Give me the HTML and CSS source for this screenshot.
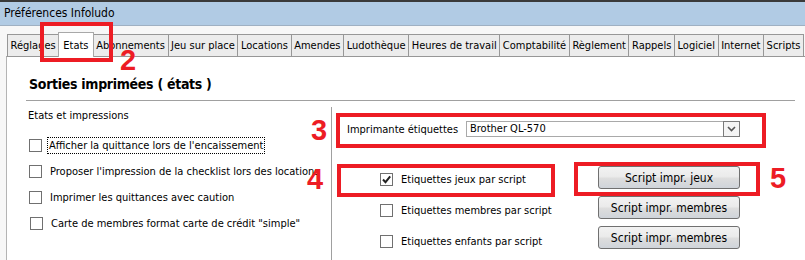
FILE: index.html
```html
<!DOCTYPE html>
<html lang="fr">
<head>
  <meta charset="UTF-8" />
  <title>Préférences Infoludo</title>
  <link rel="stylesheet" href="styles.css">
</head>
<body>
  <div class="window">
    <div class="titlebar">Préférences Infoludo</div>

    <div class="tabstrip">
      <div class="tab">Réglages</div>
      <div class="tab active">Etats</div>
      <div class="tab">Abonnements</div>
      <div class="tab">Jeu sur place</div>
      <div class="tab">Locations</div>
      <div class="tab">Amendes</div>
      <div class="tab">Ludothèque</div>
      <div class="tab">Heures de travail</div>
      <div class="tab">Comptabilité</div>
      <div class="tab">Règlement</div>
      <div class="tab">Rappels</div>
      <div class="tab">Logiciel</div>
      <div class="tab">Internet</div>
      <div class="tab">Scripts</div>
    </div>

    <div class="panel">
      <div class="panel-title">Sorties imprimées ( états )</div>
      <div class="panel-body">
        <div class="col-left">
          <div class="group-label">Etats et impressions</div>
          <div class="check-row">
            <span class="box"></span>
            <span class="check-text focused">Afficher la quittance lors de l'encaissement</span>
          </div>
          <div class="check-row">
            <span class="box"></span>
            <span class="check-text">Proposer l'impression de la checklist lors des locations</span>
          </div>
          <div class="check-row">
            <span class="box"></span>
            <span class="check-text">Imprimer les quittances avec caution</span>
          </div>
          <div class="check-row shifted">
            <span class="box"></span>
            <span class="check-text">Carte de membres format carte de crédit "simple"</span>
          </div>
        </div>

        <div class="col-right">
          <div class="printer-row">
            <span class="printer-label">Imprimante étiquettes</span>
            <div class="combo">
              <span class="combo-value">Brother QL-570</span>
              <span class="combo-btn">
                <svg width="9" height="6" viewBox="0 0 9 6"><path d="M1 1 L4.5 4.5 L8 1" fill="none" stroke="#555" stroke-width="1.6"/></svg>
              </span>
            </div>
          </div>

          <div class="scripts">
            <div class="script-checks">
              <div class="script-row">
                <span class="box">
                  <svg width="11" height="11" viewBox="0 0 11 11"><path d="M2 5.5 L4.5 8.2 L9.2 2.4" fill="none" stroke="#222" stroke-width="2"/></svg>
                </span>
                <span class="check-text">Etiquettes jeux par script</span>
              </div>
              <div class="script-row">
                <span class="box"></span>
                <span class="check-text">Etiquettes membres par script</span>
              </div>
              <div class="script-row">
                <span class="box"></span>
                <span class="check-text">Etiquettes enfants par script</span>
              </div>
            </div>
            <div class="script-buttons">
              <button class="win-btn">Script impr. jeux</button>
              <button class="win-btn">Script impr. membres</button>
              <button class="win-btn">Script impr. membres</button>
            </div>
          </div>
        </div>
      </div>
    </div>

    <!-- annotations -->
    <div class="mark mark-2"></div>
    <div class="num num-2">2</div>
    <div class="mark mark-3"></div>
    <div class="num num-3">3</div>
    <div class="mark mark-4"></div>
    <div class="num num-4">4</div>
    <div class="mark mark-5"></div>
    <div class="num num-5">5</div>
  </div>
</body>
</html>
```

FILE: styles.css
```css
body {
  margin: 0;
  background: #f7f7f7;
  font-family: 'DejaVu Sans Condensed', 'DejaVu Sans', sans-serif;
  font-size: 11px;
  color: #000;
}
.window {
  position: relative;
  width: 805px;
  height: 260px;
  overflow: hidden;
}
.titlebar {
  height: 23px;
  line-height: 23px;
  background: #b1cbe4;
  border-top: 2px solid #3a3a3a;
  border-bottom: 1px solid #9fb0c2;
  padding-left: 4px;
  font-size: 12px;
}
.tabstrip {
  display: flex;
  align-items: flex-end;
  height: 30px;
  padding-left: 8px;
  white-space: nowrap;
}
.tab {
  height: 21px;
  line-height: 22px;
  padding: 0 2.6px;
  background: #ececec;
  border: 1px solid #979797;
  border-bottom: none;
  margin-left: -1px;
}
.tab.active {
  position: relative;
  z-index: 1;
  height: 24px;
  line-height: 25px;
  margin-bottom: -1px;
  padding: 0 4px;
  background: #fff;
  border-color: #a8a8a8;
}
.panel {
  margin-left: 6px;
  height: 204px;
  background: #fff;
  border-top: 1px solid #979797;
  border-left: 1px solid #b4b4b4;
  padding: 0 10px 0 19px;
}
.panel-title {
  padding: 18px 0 7px 3px;
  height: 18px;
  line-height: 18px;
  font-size: 14px;
  letter-spacing: -0.3px;
  font-weight: bold;
  border-bottom: 1px solid #a0a0a0;
}
.panel-body {
  display: flex;
}
.col-left {
  width: 305px;
}
.group-label {
  margin-top: 7px;
  padding-left: 2px;
  line-height: 16px;
}
.check-row {
  display: flex;
  align-items: center;
  height: 26px;
  padding-left: 3px;
}
.group-label + .check-row {
  margin-top: 8px;
}
.check-row.shifted {
  padding-left: 4px;
}
.box {
  width: 11px;
  height: 11px;
  border: 1px solid #707070;
  background: #fff;
  display: flex;
  align-items: center;
  justify-content: center;
  flex-shrink: 0;
}
.check-text {
  margin-left: 6px;
  padding: 0 1px;
  line-height: 15px;
  border: 1px dotted transparent;
  white-space: nowrap;
}
.focused {
  margin-left: 5px;
  border-color: #000;
}
.col-right {
  flex: 1;
  margin-top: 6px;
  height: 160px;
  border-left: 1px solid #a0a0a0;
}
.printer-row {
  display: flex;
  align-items: center;
  margin-top: 14px;
  padding-left: 15px;
  height: 16px;
}
.printer-label {
  width: 119px;
}
.combo {
  display: flex;
  width: 272px;
  height: 14px;
  border: 1px solid #a9a9a9;
  background: #fff;
}
.combo-value {
  flex: 1;
  padding-left: 3px;
  line-height: 14px;
}
.combo-btn {
  width: 15px;
  height: 14px;
  border: 1px solid #7a7a7a;
  margin: -1px -1px 0 0;
  background: #f4f4f4;
  display: flex;
  align-items: center;
  justify-content: center;
}
.scripts {
  display: flex;
}
.script-checks {
  width: 218px;
  padding: 27px 0 0 48px;
}
.script-row {
  display: flex;
  align-items: center;
  height: 31px;
}
.script-buttons {
  display: flex;
  flex-direction: column;
  gap: 7px;
  padding-top: 29px;
}
.win-btn {
  width: 142px;
  height: 23px;
  padding: 0;
  border: 1px solid #707070;
  border-radius: 3px;
  background: linear-gradient(#f2f2f2 0%, #ebebeb 45%, #dddddd 55%, #cfd4da 100%);
  font-family: 'DejaVu Sans Condensed', 'DejaVu Sans', sans-serif;
  font-size: 12px;
  color: #000;
}

/* annotations drawn over the screenshot */
.mark {
  position: absolute;
  border: 4px solid #ed1c24;
  z-index: 5;
}
.mark-2 { left: 40px; top: 22px; width: 65px; height: 32px; }
.mark-3 { left: 336px; top: 113px; width: 422px; height: 27px; }
.mark-4 { left: 337px; top: 164px; width: 210px; height: 25px; }
.mark-5 { left: 574px; top: 162px; width: 178px; height: 26px; }
.num {
  position: absolute;
  z-index: 5;
  color: #ed1c24;
  font-family: 'Liberation Sans', Arial, sans-serif;
  font-weight: bold;
  font-size: 29px;
  line-height: 29px;
}
.num-2 { left: 120px; top: 46px; }
.num-3 { left: 311px; top: 116px; }
.num-4 { left: 307px; top: 165px; }
.num-5 { left: 770px; top: 164px; }
```
